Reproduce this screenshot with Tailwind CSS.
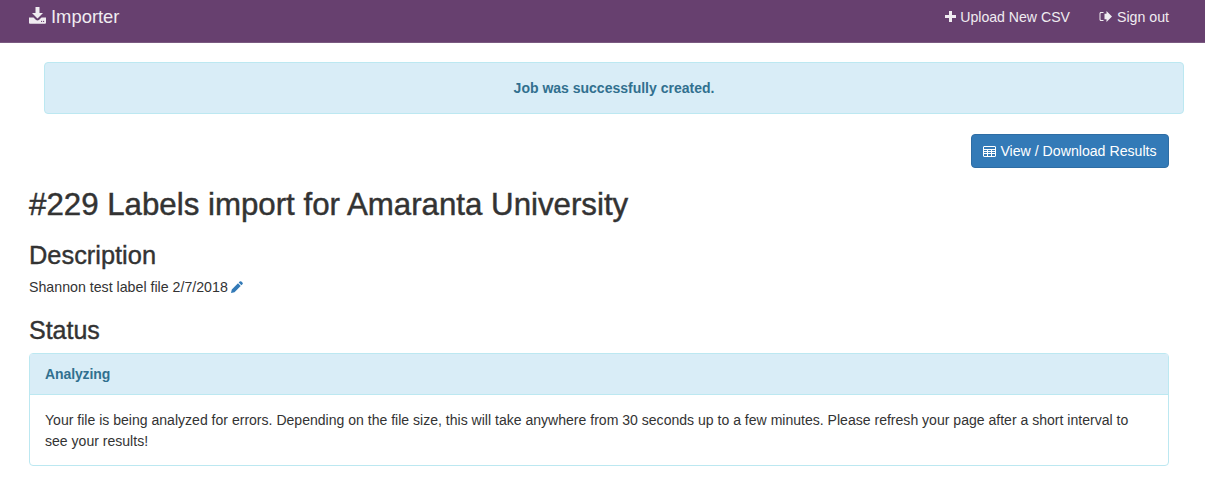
<!DOCTYPE html>
<html><head><meta charset="utf-8"><script src="https://cdn.jsdelivr.net/npm/@tailwindcss/browser@4"></script></head>
<body class="bg-white text-[#333] font-['Liberation_Sans',Arial,sans-serif] text-[14.2px] leading-[20.8px] overflow-hidden">
<nav class="h-[43px] bg-[#67406f] border-b border-[#7a5a81] flex items-start justify-between pl-[29px] pr-[36px] text-[#f0ecf1]">
  <a class="flex items-center gap-[5px] text-[18.4px] h-[34px]">
    <svg class="w-[17px] h-[17px] mb-[3px]" viewBox="0 0 17 17" fill="#f0ecf1"><path d="M6.5 0h4v6h3.5l-5.500 5.500L3 6h3.500z"/><path d="M0 10.500h4.500l2.300 2.300c1 .9 2.400.9 3.400 0l2.300-2.300H17v5.300c0 .5-.4.9-.9.9H.9c-.5 0-.9-.4-.9-.9z"/><circle cx="12.600" cy="14.400" r=".6" fill="#67406f"/><circle cx="14.600" cy="14.400" r=".6" fill="#67406f"/></svg>
    <span>Importer</span>
  </a>
  <div class="flex h-[34px] items-center gap-[29px]">
    <a class="flex items-center gap-[4px]">
      <svg class="w-[11px] h-[11px]" viewBox="0 0 11 11" fill="#f0ecf1"><path d="M4 0h3v4h4v3H7v4H4V7H0V4h4z"/></svg>
      <span class="text-[14.1px]">Upload New CSV</span>
    </a>
    <a class="flex items-center gap-[5px]">
      <svg class="w-[13px] h-[11px]" viewBox="0 0 13 11" fill="#f0ecf1"><path d="M7.500 0v2.700H5.500v5.600h2V11L13 5.500z"/><path d="M4.500 1H2C1 1 .5 1.600.5 2.500v6C.5 9.400 1 10 2 10h2.500V9H2.200c-.4 0-.7-.3-.7-.7V2.700c0-.4.3-.7.7-.7h2.300z"/></svg>
      <span>Sign out</span>
    </a>
  </div>
</nav>
<main class="pl-[29px] pr-[36px]">
  <div class="ml-[15px] mr-[-15px] mt-[19px] h-[52px] rounded-[4px] border border-[#bce8f1] bg-[#d9edf7] text-[#31708f] font-bold text-[14px] flex items-center justify-center">Job was successfully created.</div>
  <div class="flex justify-end mt-[20px]">
    <a class="h-[34px] w-[198px] rounded-[4px] border border-[#2e6da4] bg-[#337ab7] text-white flex items-center justify-center gap-[4px]">
      <svg class="w-[13px] h-[11px]" viewBox="0 0 13 11" fill="none" stroke="#fff"><path d="M.5 1a.5.5 0 0 1 .5-.5h11a.5.5 0 0 1 .5.5v9a.5.5 0 0 1-.5.5H1a.5.5 0 0 1-.5-.5z"/><path d="M.5 3.500h12M.5 5.500h12M.5 7.500h12M4.500 3v7.500M8.500 3v7.500"/></svg>
      <span class="text-[14.15px]">View / Download Results</span>
    </a>
  </div>
  <h1 class="text-[31.250px] leading-[34px] font-medium mt-[20px] [-webkit-text-stroke:0.45px_#333]">#229 Labels import for Amaranta University</h1>
  <h2 class="text-[25.400px] leading-[28px] font-medium mt-[19px] [-webkit-text-stroke:0.4px_#333]">Description</h2>
  <p class="mt-[8px] flex items-center gap-[3px]">Shannon test label file 2/7/2018
    <svg class="w-[12px] h-[12px]" viewBox="0 0 12 12" fill="#337ab7"><path d="M8.700.6a1.200 1.200 0 0 1 1.700 0l1 1a1.200 1.200 0 0 1 0 1.700l-1 1L7.700 1.600zM7 2.300 9.700 5 3.500 11.200 0 12l.8-3.500z"/></svg>
  </p>
  <h2 class="text-[25px] leading-[28px] font-medium mt-[18px] [-webkit-text-stroke:0.4px_#333]">Status</h2>
  <section class="mt-[9px] rounded-[4px] border border-[#bce8f1] h-[113px]">
    <div class="h-[41px] pt-[2px] bg-[#d9edf7] border-b border-[#bce8f1] text-[#31708f] font-bold text-[14px] flex items-center px-[15px]"><span class="tracking-[-0.1px]">Analyzing</span></div>
    <div class="px-[15px] pt-[15px] text-[14.050px]">Your file is being analyzed for errors. Depending on the file size, this will take anywhere from 30 seconds up to a few minutes. Please refresh your page after a short interval to see your results!</div>
  </section>
</main>
</body></html>
